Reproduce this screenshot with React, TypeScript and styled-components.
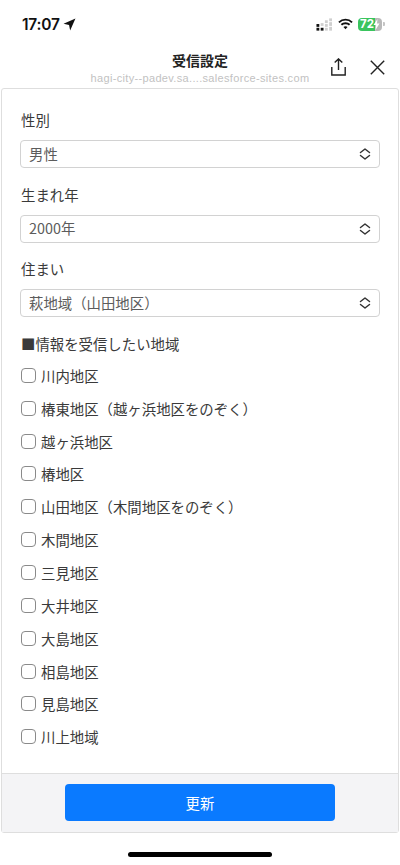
import React from 'react'
import styled, { createGlobalStyle } from 'styled-components'

const GlobalStyle = createGlobalStyle`
  html, body {
    margin: 0;
    padding: 0;
    background: #fff;
  }
  body {
    font-family: "Noto Sans CJK JP", "Liberation Sans", sans-serif;
    color: #333;
  }
  * {
    box-sizing: border-box;
  }
`

const Page = styled.div`
  width: 400px;
  height: 865px;
  display: flex;
  flex-direction: column;
  overflow: hidden;
  background: #fff;
`

const StatusBar = styled.div`
  height: 44px;
  flex: none;
  display: flex;
  align-items: flex-start;
  justify-content: space-between;
  padding: 14px 15.5px 0 22px;
`

const Clock = styled.div`
  display: flex;
  align-items: center;
  gap: 3px;
  height: 20px;
  font-family: Inter, "Liberation Sans", sans-serif;
  font-size: 15.5px;
  font-weight: 600;
  letter-spacing: -0.2px;
  color: #111;
`

const StatusIcons = styled.div`
  display: flex;
  align-items: center;
  gap: 5px;
  height: 20px;
`

const SignalIcon = styled.svg`
  margin-right: 1px;
`

const Battery = styled.div`
  position: relative;
  width: 24px;
  height: 13px;
  border-radius: 4px;
  overflow: hidden;
  background: linear-gradient(90deg, #3ac45e 0 72%, #b9b9b9 72% 100%);
`

const BatteryText = styled.span`
  display: block;
  padding-left: 2px;
  font-family: Inter, "Liberation Sans", sans-serif;
  font-size: 11.5px;
  line-height: 13px;
  font-weight: 700;
  color: #fff;
`

const BatteryBolt = styled.svg`
  position: absolute;
  top: 1px;
  right: 2px;
`

const BatteryTip = styled.div`
  width: 1.5px;
  height: 4px;
  margin-left: -4px;
  border-radius: 0 1px 1px 0;
  background: #c4c4c4;
`

const Header = styled.div`
  position: relative;
  height: 44px;
  flex: none;
  display: flex;
  flex-direction: column;
  align-items: center;
`

const Title = styled.div`
  margin-top: 7px;
  font-size: 14px;
  line-height: 18px;
  font-weight: 700;
  color: #222;
`

const Url = styled.div`
  margin-top: 2px;
  font-family: "Liberation Sans", sans-serif;
  font-size: 11px;
  line-height: 14px;
  letter-spacing: 0.33px;
  color: #c2c2c2;
`

const HeaderActions = styled.div`
  position: absolute;
  top: 14px;
  right: 15px;
  display: flex;
  align-items: flex-start;
  gap: 24px;
`

const CloseIcon = styled.svg`
  margin-top: 2px;
`

const Panel = styled.div`
  flex: none;
  height: 745px;
  margin: 0 0 0 1px;
  width: 398px;
  display: flex;
  flex-direction: column;
  border: 1px solid #dedede;
  border-radius: 3px;
`

const FormBody = styled.div`
  flex: 1;
  padding: 20px 18px 0 18px;
`

const Field = styled.div`
  margin-bottom: 15.5px;
`

const Label = styled.div`
  padding-left: 1px;
  font-size: 14.4px;
  line-height: 22px;
  color: #3a3a3a;
`

const SelectBox = styled.div`
  height: 28px;
  margin-top: 9px;
  padding: 0 8px 2px;
  display: flex;
  align-items: center;
  justify-content: space-between;
  border: 1px solid #d2d2d2;
  border-radius: 4px;
  background: #fff;
  font-size: 14.4px;
  color: #5c5c5c;
`

const ChevronIcon = styled.svg`
  margin-top: 2px;
`

const RegionList = styled.div`
  margin-top: 4.5px;
  padding-left: 1px;
`

const CheckRow = styled.label`
  height: 32.85px;
  display: flex;
  align-items: center;
  gap: 5px;
  font-size: 14.4px;
  color: #3a3a3a;
`

const CheckBox = styled.span`
  width: 15px;
  height: 15px;
  flex: none;
  border: 1.5px solid #8a8a8a;
  border-radius: 4px;
  background: #fff;
`

const Footer = styled.div`
  height: 59px;
  flex: none;
  padding-top: 10px;
  display: flex;
  justify-content: center;
  border-top: 1px solid #dedede;
  background: #f4f4f6;
`

const UpdateButton = styled.button`
  width: 270px;
  height: 37px;
  border: none;
  border-radius: 4px;
  background: #0a7aff;
  color: #fff;
  font-family: inherit;
  font-size: 14.4px;
`

const HomeArea = styled.div`
  flex: 1;
  display: flex;
  justify-content: center;
  padding-top: 19px;
`

const HomeBar = styled.div`
  width: 144px;
  height: 5px;
  border-radius: 3px;
  background: #000;
`

const Chevrons = () => (
  <ChevronIcon width="12" height="14" viewBox="0 0 12 14" fill="none" stroke="#333" strokeWidth="1.5" strokeLinecap="round" strokeLinejoin="round">
    <path d="M1.5 5.5 L6 2 L10.5 5.5" />
    <path d="M1.5 8.5 L6 12 L10.5 8.5" />
  </ChevronIcon>
)

const Signal = () => (
  <SignalIcon width="16" height="13" viewBox="0 0 17 13">
    <g fill="#cfcfcf">
      <rect x="5" y="5" width="3" height="3" />
      <rect x="9.5" y="2" width="3" height="3" />
      <rect x="9.5" y="6" width="3" height="3" />
      <rect x="9.5" y="10" width="3" height="3" />
      <rect x="14" y="0" width="3" height="3" />
      <rect x="14" y="4" width="3" height="4" />
      <rect x="14" y="9" width="3" height="4" />
    </g>
    <g fill="#111">
      <rect x="0.5" y="6" width="3" height="3" />
      <rect x="0.5" y="10" width="3" height="3" />
      <rect x="5" y="10" width="3" height="3" />
    </g>
  </SignalIcon>
)

const Wifi = () => (
  <svg width="15" height="12" viewBox="0 0 16 12" fill="none" stroke="#111" strokeWidth="2">
    <path d="M1 4.2 C5 0.4 11 0.4 15 4.2" />
    <path d="M3.6 6.8 C6 4.6 10 4.6 12.4 6.8" />
    <path d="M8 11.5 L5.8 9.2 C7 8.2 9 8.2 10.2 9.2 Z" fill="#111" stroke="none" />
  </svg>
)

const regions = [
  '川内地区',
  '椿東地区（越ヶ浜地区をのぞく）',
  '越ヶ浜地区',
  '椿地区',
  '山田地区（木間地区をのぞく）',
  '木間地区',
  '三見地区',
  '大井地区',
  '大島地区',
  '相島地区',
  '見島地区',
  '川上地域',
]

const selects = [
  { label: '性別', value: '男性' },
  { label: '生まれ年', value: '2000年' },
  { label: '住まい', value: '萩地域（山田地区）' },
]

const App = () => {
  return (
    <Page>
      <GlobalStyle />
      <StatusBar>
        <Clock>
          17:07
          <svg width="13" height="13" viewBox="0 0 12 12">
            <path d="M11.5 0.5 L0.5 5.4 L5.6 6.4 L6.6 11.5 Z" fill="#111" />
          </svg>
        </Clock>
        <StatusIcons>
          <Signal />
          <Wifi />
          <Battery>
            <BatteryText>72</BatteryText>
            <BatteryBolt width="7" height="11" viewBox="0 0 7 11">
              <path d="M4.5 0 L0.5 6 L3 6 L2.5 11 L6.5 4.6 L4 4.6 Z" fill="#fff" />
            </BatteryBolt>
          </Battery>
          <BatteryTip />
        </StatusIcons>
      </StatusBar>
      <Header>
        <Title>受信設定</Title>
        <Url>hagi-city--padev.sa....salesforce-sites.com</Url>
        <HeaderActions>
          <svg width="15" height="18" viewBox="0 0 15 18" fill="none" stroke="#222" strokeWidth="1.4">
            <path d="M7.5 12 V1 M3.7 4.6 L7.5 0.9 L11.3 4.6" />
            <path d="M0.8 9 V17 H14.2 V9" />
          </svg>
          <CloseIcon width="15" height="15" viewBox="0 0 15 15" fill="none" stroke="#222" strokeWidth="1.4">
            <path d="M0.8 0.8 L14.2 14.2 M14.2 0.8 L0.8 14.2" />
          </CloseIcon>
        </HeaderActions>
      </Header>
      <Panel>
        <FormBody>
          {selects.map(s => (
            <Field key={s.label}>
              <Label>{s.label}</Label>
              <SelectBox>
                {s.value}
                <Chevrons />
              </SelectBox>
            </Field>
          ))}
          <Label>■情報を受信したい地域</Label>
          <RegionList>
            {regions.map(r => (
              <CheckRow key={r}>
                <CheckBox />
                {r}
              </CheckRow>
            ))}
          </RegionList>
        </FormBody>
        <Footer>
          <UpdateButton>更新</UpdateButton>
        </Footer>
      </Panel>
      <HomeArea>
        <HomeBar />
      </HomeArea>
    </Page>
  )
}

export default App
